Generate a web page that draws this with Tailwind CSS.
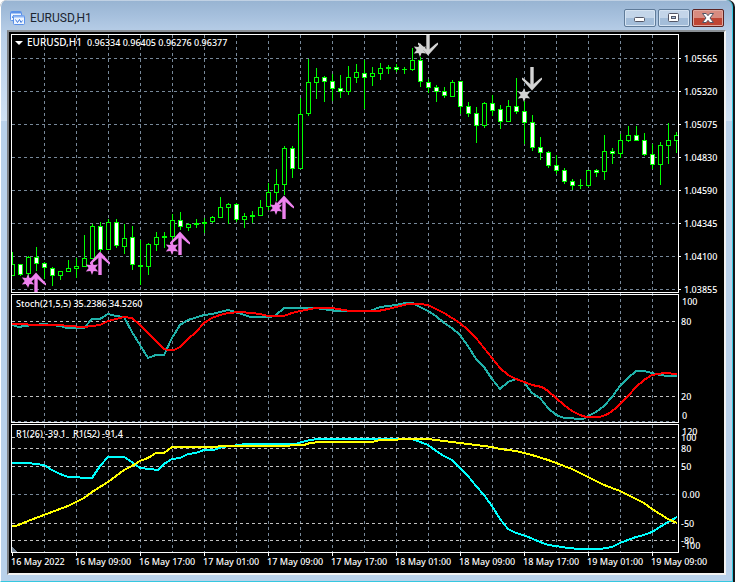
<!DOCTYPE html>
<html lang="en">
<head>
<meta charset="utf-8">
<title>EURUSD,H1</title>
<script src="https://cdn.jsdelivr.net/npm/@tailwindcss/browser@4"></script>
</head>
<body class="bg-white">
<div class="bg-white pr-px">
  <div class="rounded-t-[7px] border-r-2 border-[#15181c] bg-[#55606c]">
    <section aria-label="EURUSD,H1 chart window" class="rounded-t-[7px] border-l border-r border-b border-l-white border-r-[#35c8e0] border-b-[#35c8e0] bg-[linear-gradient(to_bottom,#e8eef5_0px,#98b4d2_1px,#a6c0dd_16px,#b9cfe8_34px,#d0e1f4_121px,#b9d1ea_121px)] px-1.5 pb-1.5">
      <header class="flex h-[30px] items-start justify-between pr-0.5 pl-[3px]">
        <div class="flex items-center gap-1 pt-2.5">
          <svg class="size-4 shrink-0" viewBox="0 0 16 16" fill="none" aria-hidden="true">
            <rect x=".5" y="1.5" width="11" height="9" rx="1" fill="#eef5ff" stroke="#5b91e8"/>
            <path d="M1 2.5h10" stroke="#5b91e8" stroke-width="2"/>
            <path d="M2.5 8V6.500l1.500-1.500L5 6.500" stroke="#5b91e8"/>
            <rect x="3.500" y="5.500" width="11" height="9" rx="1" fill="#eef5ff" stroke="#5b91e8"/>
            <path d="M4 6.500h10" stroke="#8cb4f4" stroke-width="2"/>
            <path d="M5.500 9.500L7.500 12.500L9.500 9.500L11 12.500L12.500 10.500" stroke="#3f79dc"/>
          </svg>
          <h1 class="font-[Roboto,sans-serif] text-[12px] leading-4 text-[#1c2530]">EURUSD,H1</h1>
        </div>
        <div class="flex gap-0.5 pt-[9px]">
          <button type="button" aria-label="Minimize" class="flex h-[18px] w-8 items-center justify-center rounded-[2px] border border-[#5f7b99] bg-linear-to-b from-[#c3d5e9] from-50% to-[#a3bdd9] to-50% shadow-[inset_0_0_0_1px_#d5e3f2]">
            <svg class="h-3 w-3" viewBox="0 0 12 12" aria-hidden="true"><rect x=".5" y="5.500" width="10" height="4" rx="1" fill="#fff" stroke="#535666"/></svg>
          </button>
          <button type="button" aria-label="Restore" class="flex h-[18px] w-8 items-center justify-center rounded-[2px] border border-[#5f7b99] bg-linear-to-b from-[#c3d5e9] from-50% to-[#a3bdd9] to-50% shadow-[inset_0_0_0_1px_#d5e3f2]">
            <svg class="h-3 w-3" viewBox="0 0 12 12" aria-hidden="true"><rect x=".5" y="1.500" width="10" height="8" rx="1" fill="#fff" stroke="#535666"/><rect x="3.500" y="4.500" width="4" height="2" fill="#a9c1db" stroke="#535666"/></svg>
          </button>
          <button type="button" aria-label="Close" class="flex h-[18px] w-8 items-center justify-center rounded-[2px] border border-[#5c2322] bg-linear-to-b from-[#d88b80] from-50% to-[#bf4534] to-50% shadow-[inset_0_0_0_1px_#e0a79e]">
            <svg class="h-3 w-3" viewBox="0 0 12 12" aria-hidden="true"><path d="M.5 1.500h3.700L6 3.700l1.800-2.200h3.700L8 6L11.500 10.500H7.800L6 8.300l-1.800 2.200H.5L4 6z" fill="#fff" stroke="#535666"/></svg>
          </button>
        </div>
      </header>
      <main class="border-2 border-t-[#8a8f94] border-l-[#7c7f83] border-r-[#f2f2f2] border-b-[#f2f2f2] bg-black">
        <svg id="chart" class="block h-auto w-full font-['Noto_Sans',sans-serif] text-[9px] font-medium" viewBox="9 32 715 541" fill="#fff" role="img" aria-label="EURUSD hourly candles with Stochastic and R1 indicators">
          <defs>
            <clipPath id="plot"><rect x="12" y="35" width="666" height="257"/></clipPath>
            <g id="up"><path d="M-1.700 1h3.400v21h-3.400z"/><path d="M0-1.500L-10 9.500v2L-7.500 10L0 3.500L7.500 10L10 11.500v-2z"/></g>
            <path id="star" d="M0-7L1.600-2.900L6.200-3.500L3.300 0L6.200 3.500L1.600 2.900L0 7L-1.600 2.900L-6.200 3.500L-3.300 0L-6.200-3.500L-1.600-2.900z"/>
          </defs>
          <g shape-rendering="crispEdges" fill="none">
            <path id="grid" stroke="#778899" stroke-dasharray="3 3"/>
            <path id="levels" stroke="#c0c0c0" stroke-dasharray="3 3"/>
            <g id="candles"></g>
            <g stroke-width="2" stroke-linejoin="round">
              <polyline stroke="#20b2aa" points="12,325 19,327 24,326 44,324 60,326 67,328 84,328 92,319 100,319 108,314 116,316 124,317 132,332 140,345 148,358 156,355 164,355 172,338 180,325 188,320 204,315 212,314 228,310 236,312 244,315 251,317 271,317 276,315 284,308 316,308 337,311 370,311 380,307 396,305 406,303 413,303 420,307 428,311 436,316 444,323 452,328 460,335 468,346 476,359 484,367 492,379 500,389 508,382 516,379 524,382 532,393 540,398 548,408 556,415 564,418 583,419 588,416 596,412 604,406 612,397 620,386 628,378 636,371 644,371 652,373 660,375 668,376 677,376"/>
              <polyline stroke="#ff0000" points="12,324 44,325 60,325 68,326 84,327 100,325 108,321 124,317 132,318 140,325 148,333 156,341 164,349 168,350 174,350 180,347 188,339 196,332 204,323 212,318 220,315 228,313 240,312 252,313 260,314 268,316 284,316 292,313 300,311 316,308 332,308 350,311 378,311 388,309 400,306 408,304 420,304 428,305 436,309 444,313 452,318 460,323 468,330 476,338 484,348 492,358 500,368 508,375 516,379 524,382 532,385 542,387 548,391 556,398 564,405 572,411 580,415 586,417 600,417 608,414 616,408 620,404 628,396 636,387 644,380 652,375 664,373 677,374"/>
              <polyline stroke="#00ffff" points="12,463 28,463 44,465 52,470 60,474 68,477 92,478 100,466 108,457 124,457 132,462 140,468 158,470 164,464 172,459 180,458 188,454 196,453 204,450 214,450 222,447 240,445 245,444 295,444 302,442 310,440 318,439 396,439 412,439 420,442 428,445 436,451 444,456 452,460 460,468 468,476 476,486 484,495 492,506 500,519 508,529 516,533 526,536 540,542 548,545 556,546 568,548 580,549 600,549 612,547 620,543 628,540 636,537 644,535 652,532 660,527 668,522 677,517"/>
              <polyline stroke="#ffff00" points="12,526 16,526 28,521 44,515 68,506 84,498 92,492 100,487 108,482 124,470 132,466 140,461 148,458 156,453 164,453 172,447 214,447 222,446 276,446 304,445 310,443 320,442 372,442 380,440 396,440 400,439 428,439 444,441 460,443 476,445 492,447 500,449 516,451 532,455 548,460 556,463 572,469 588,477 604,485 620,491 636,499 644,503 652,509 660,514 668,519 677,523"/>
            </g>
            <path stroke="#fff" d="M11.500 34.500h667v258h-667zM11.500 294.500h667v128h-667zM11.500 424.500h667v128h-667z"/>
            <path id="ticks" stroke="#fff"/>
            <path fill="#778899" d="M12 547l5 5h-5z"/>
          </g>
          <g clip-path="url(#plot)">
            <g fill="#ee82ee">
              <use href="#up" x="36" y="274"/><use href="#star" x="28" y="281"/>
              <use href="#up" x="100" y="253"/><use href="#star" x="92" y="268"/>
              <use href="#up" x="180" y="233"/><use href="#star" x="172" y="248"/>
              <use href="#up" x="284" y="197"/><use href="#star" x="276" y="208"/>
            </g>
            <g fill="#d3d3d3">
              <use href="#up" transform="translate(428 54) scale(1 -1)"/><use href="#star" x="420" y="50"/>
              <use href="#up" transform="translate(532 89) scale(1 -1)"/><use href="#star" x="524" y="95"/>
            </g>
          </g>
          <path d="M15 41h8l-4 4z"/>
          <text x="27" y="46" class="text-[10px]">EURUSD,H1</text>
          <text x="87" y="46">0.96334 0.96405 0.96276 0.96377</text>
          <text x="16" y="307">Stoch(21,5,5) 35.2386 34.5260</text>
          <text x="16" y="437">R1(26) -39.1</text>
          <text x="73" y="437">R1(52) -91.4</text>
          <g>
            <text x="684" y="62">1.05565</text><text x="684" y="95">1.05320</text><text x="684" y="128">1.05075</text><text x="684" y="161">1.04830</text>
            <text x="684" y="194">1.04590</text><text x="684" y="227">1.04345</text><text x="684" y="260">1.04100</text><text x="684" y="293">1.03855</text>
          </g>
          <g>
            <text x="682" y="305">100</text><text x="681" y="325">80</text><text x="681" y="400">20</text><text x="682" y="419">0</text>
          </g>
          <g>
            <text x="682" y="435">120</text><text x="681" y="441">100</text><text x="681" y="452">80</text><text x="681" y="470">50</text>
            <text x="682" y="498">0.00</text><text x="681" y="527">-50</text><text x="681" y="544">-80</text><text x="682" y="549">-100</text>
          </g>
          <g>
            <text x="11" y="565">16 May 2022</text><text x="75" y="565">16 May 09:00</text><text x="139" y="565">16 May 17:00</text><text x="203" y="565">17 May 01:00</text>
            <text x="267" y="565">17 May 09:00</text><text x="331" y="565">17 May 17:00</text><text x="395" y="565">18 May 01:00</text><text x="459" y="565">18 May 09:00</text>
            <text x="523" y="565">18 May 17:00</text><text x="587" y="565">19 May 01:00</text><text x="651" y="565">19 May 09:00</text>
          </g>
        </svg>
      </main>
    </section>
  </div>
</div>
<script>
  // One row per hour: wick top, wick bottom, body top, body bottom, 1 = falling candle
  const candles = [
    [252,275,264,275,0],[264,275,264,274,1],[256,275,257,273,0],[247,270,257,263,1],[262,278,263,267,1],[267,285,268,275,1],
    [271,279,271,275,0],[260,271,268,271,0],[258,277,266,268,0],[235,266,258,266,0],[224,258,226,258,0],[222,251,226,249,1],
    [219,249,222,249,0],[219,247,222,245,1],[224,253,238,246,0],[226,269,237,264,1],[240,284,265,266,0],[243,274,244,266,0],
    [232,250,237,244,0],[232,247,236,237,0],[214,241,220,236,0],[212,229,220,226,1],[223,230,224,227,0],[219,227,223,224,0],
    [218,232,222,223,0],[216,222,217,221,0],[197,217,207,217,0],[203,223,204,207,0],[203,221,204,219,1],[213,227,216,219,0],
    [211,222,215,216,0],[200,215,207,215,0],[183,209,192,206,0],[169,200,184,192,0],[146,194,148,184,0],[146,177,148,168,1],
    [98,168,114,168,0],[59,115,82,113,0],[68,98,77,82,0],[76,101,77,81,1],[74,100,81,88,1],[75,97,88,91,1],
    [66,94,77,91,0],[64,82,72,77,0],[60,108,73,77,1],[67,85,73,76,0],[63,79,68,73,0],[65,73,67,68,0],
    [64,71,67,69,1],[67,73,69,69,0],[48,70,60,69,0],[57,86,60,81,1],[79,92,82,87,1],[85,101,87,91,1],
    [87,97,91,95,1],[80,96,82,96,0],[81,113,81,106,1],[102,116,106,113,1],[107,142,113,125,1],[102,127,103,125,0],
    [95,115,103,110,1],[105,128,109,121,1],[100,121,106,121,0],[78,113,106,111,1],[101,143,111,122,1],[115,150,122,147,1],
    [137,159,147,152,1],[151,167,152,165,1],[155,173,165,170,1],[168,183,170,181,1],[179,189,181,185,1],[179,188,185,185,0],
    [170,186,170,185,0],[169,176,170,172,1],[135,179,151,171,0],[148,163,151,153,1],[134,157,140,153,0],[126,141,135,140,0],
    [126,140,135,140,1],[133,155,140,154,1],[144,168,154,164,1],[142,184,145,164,0],[123,163,140,145,0],[132,152,135,140,0]
  ];
  const rect = (x, y, w, h, fill) => `<rect x="${x}" y="${y}" width="${w}" height="${h}" fill="${fill}"/>`;
  let marks = '';
  candles.forEach(([hi, lo, top, bottom, falling], i) => {
    const x = 12 + 8 * i;
    const left = Math.max(12, x - 2), right = Math.min(677, x + 2);
    marks += rect(x, hi, 1, lo - hi + 1, '#00ff00');
    marks += rect(left, top, right - left + 1, bottom - top + 1, '#00ff00');
    if (bottom - top > 1) {
      const innerLeft = Math.max(12, x - 1), innerRight = Math.min(677, x + 1);
      marks += rect(innerLeft, top + 1, innerRight - innerLeft + 1, bottom - top - 1, falling ? '#ffffff' : '#000000');
    }
  });
  document.getElementById('candles').innerHTML = marks;

  let grid = '', ticks = '';
  for (let x = 44; x < 678; x += 32) grid += `M${x}.5 35V552`;
  for (let y = 58; y < 292; y += 33) {
    grid += `M12 ${y}.5H678`;
    ticks += `M679 ${y}.5h2`;
  }
  grid += 'M12 421.5H678M12 494.5H678';
  for (let x = 12; x < 678; x += 64) ticks += `M${x}.5 553v3`;
  document.getElementById('grid').setAttribute('d', grid);
  document.getElementById('ticks').setAttribute('d', ticks);
  document.getElementById('levels').setAttribute('d', [321, 396, 437, 448, 466, 523, 540].map(y => `M12 ${y}.5H678`).join(''));
</script>
</body>
</html>
